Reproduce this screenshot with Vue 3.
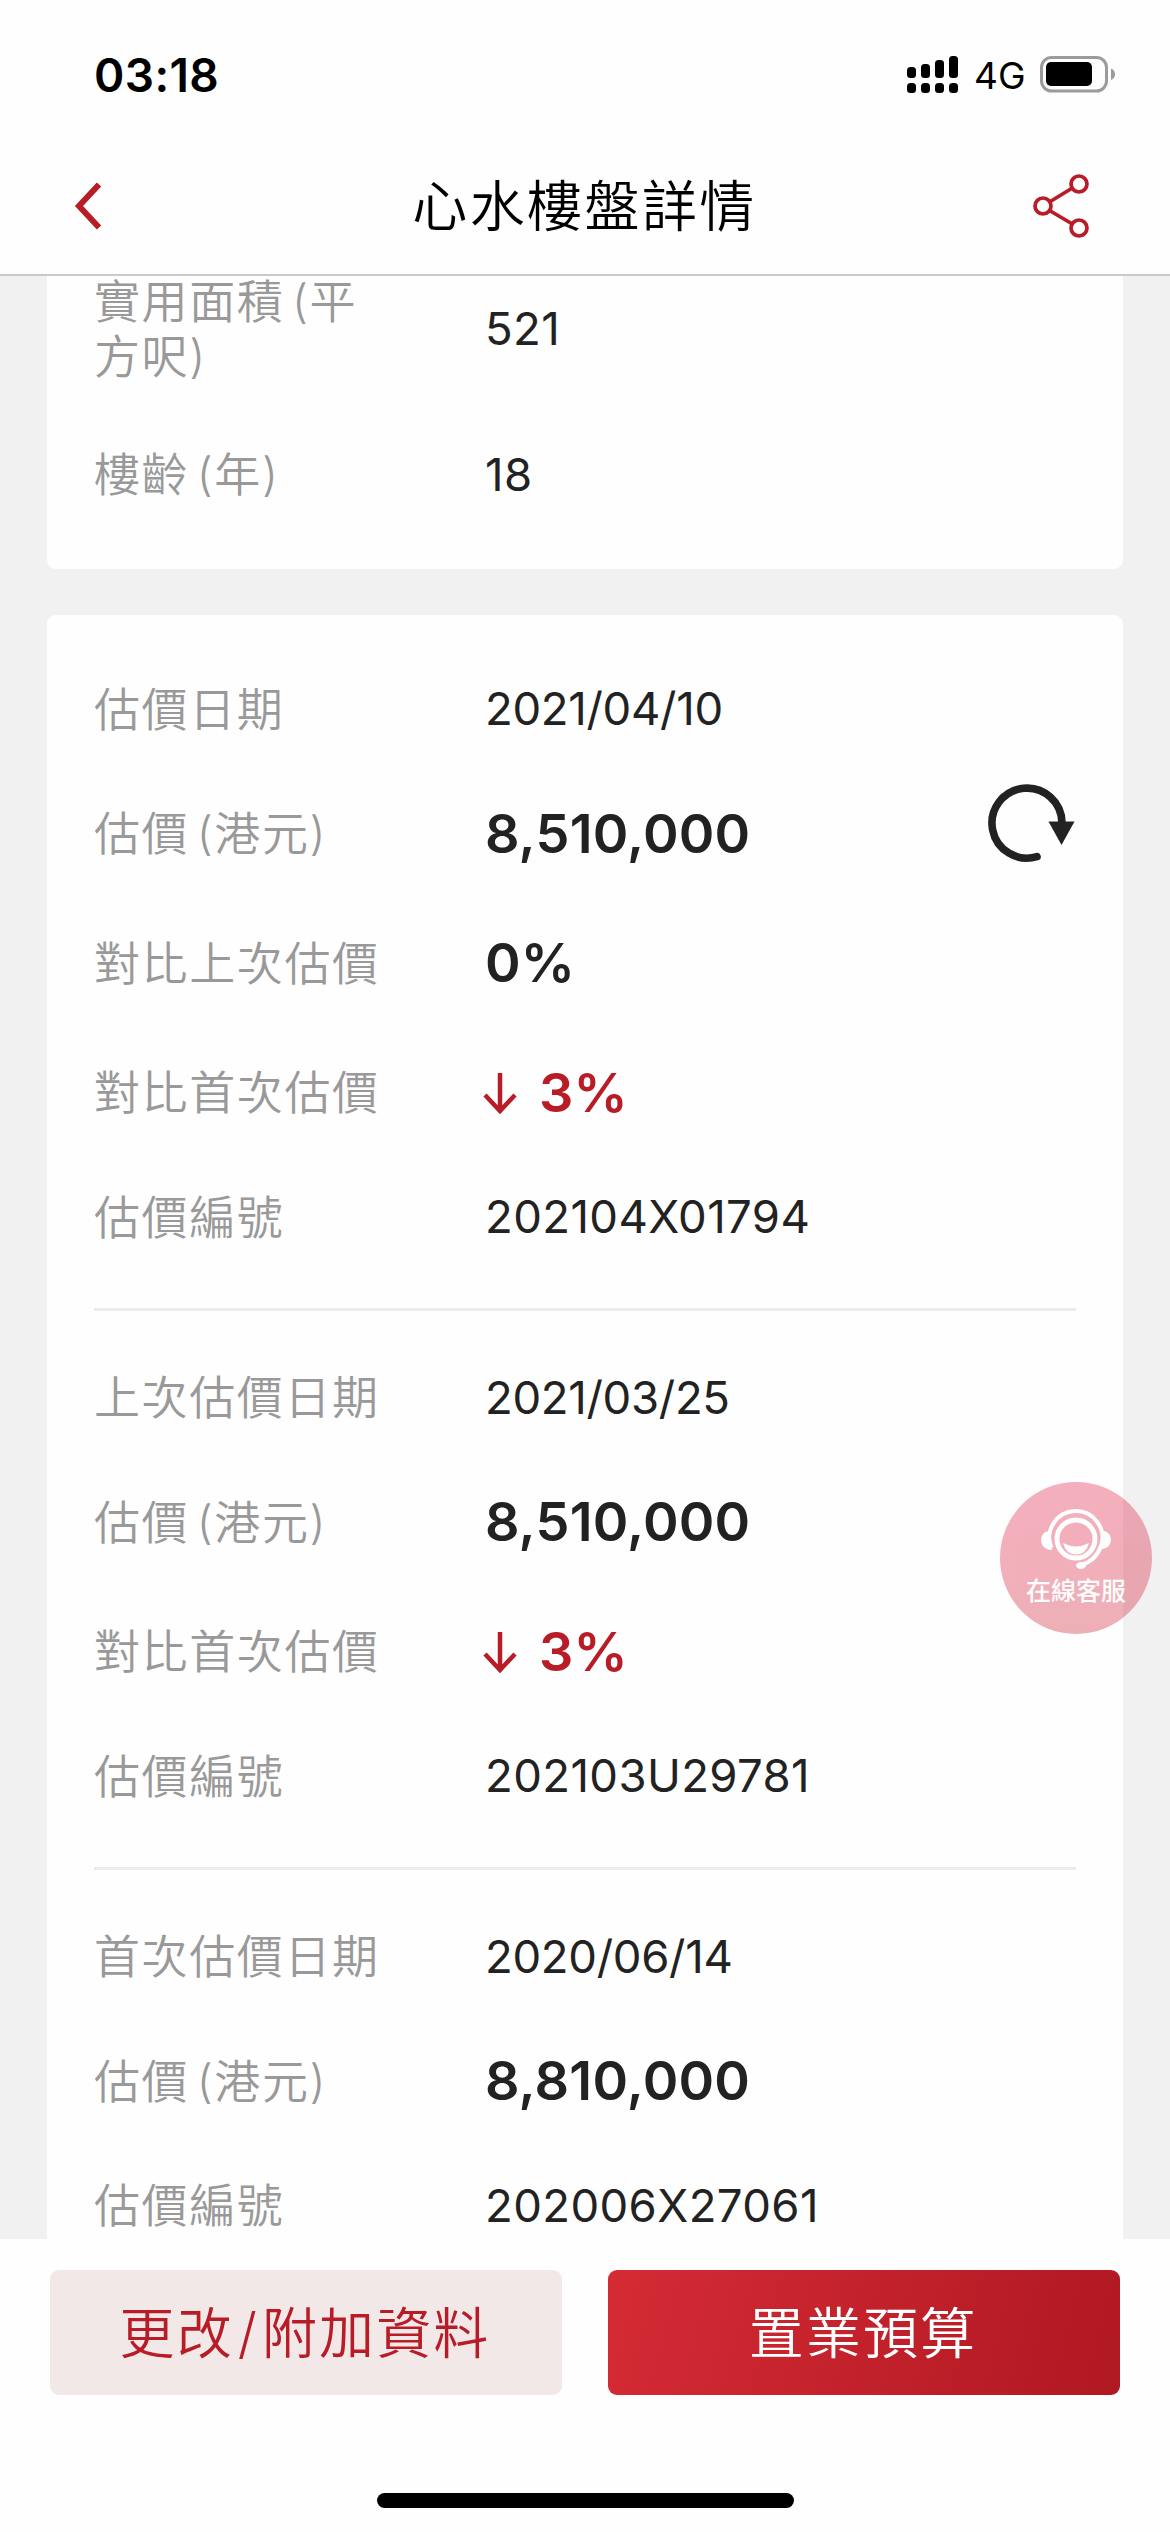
<script setup>
const basics = [
  { label: '實用面積 (平方呎)', value: '521', tall: true },
  { label: '樓齡 (年)', value: '18' },
]

const valuations = [
  [
    { label: '估價日期', value: '2021/04/10', date: true },
    { label: '估價 (港元)', value: '8,510,000', big: true, refresh: true },
    { label: '對比上次估價', value: '0%', big: true },
    { label: '對比首次估價', value: '3%', big: true, down: true },
    { label: '估價編號', value: '202104X01794' },
  ],
  [
    { label: '上次估價日期', value: '2021/03/25', date: true },
    { label: '估價 (港元)', value: '8,510,000', big: true },
    { label: '對比首次估價', value: '3%', big: true, down: true },
    { label: '估價編號', value: '202103U29781' },
  ],
  [
    { label: '首次估價日期', value: '2020/06/14', date: true },
    { label: '估價 (港元)', value: '8,810,000', big: true },
    { label: '估價編號', value: '202006X27061' },
  ],
]
</script>

<template>
  <div class="screen">
    <div class="status">
      <span class="time">03:18</span>
      <div class="status-right">
        <svg class="signal" width="52" height="38" viewBox="0 0 52 38">
          <rect x="0" y="11" width="9" height="11" rx="3.5" />
          <rect x="14" y="8" width="9" height="14" rx="3.5" />
          <rect x="28" y="4" width="9" height="18" rx="3.5" />
          <rect x="42" y="0" width="9" height="22" rx="3.5" />
          <rect v-for="i in 4" :key="i" :x="(i - 1) * 14" y="27" width="9" height="10" rx="3.5" />
        </svg>
        <span class="net">4G</span>
        <svg width="76" height="38" viewBox="0 0 76 38">
          <rect x="1.5" y="1.5" width="65" height="33.5" rx="10" fill="none" stroke="#9b9b9b" stroke-width="3" />
          <rect x="6" y="6" width="46" height="24" rx="5" />
          <path d="M71 12.5c5.300 2 5.300 9.500 0 11.500z" fill="#9b9b9b" />
        </svg>
      </div>
    </div>

    <header class="nav">
      <svg class="back" width="30" height="50" viewBox="0 0 30 50">
        <path d="M27 3.500L7 25L27 46.500" fill="none" stroke="#b81c26" stroke-width="6" />
      </svg>
      <h1>心水樓盤詳情</h1>
      <svg class="share" width="58" height="66" viewBox="0 0 58 66" fill="none" stroke="#b81c26" stroke-width="3.700">
        <path d="M17.500 29L39.500 15.500M17.500 37.500L39.500 50.500" />
        <circle cx="11" cy="33" r="8" />
        <circle cx="47" cy="11" r="8" />
        <circle cx="47" cy="55" r="8" />
      </svg>
    </header>

    <main class="content">
      <section class="card first">
        <div v-for="row in basics" :key="row.label" class="row" :class="{ tall: row.tall }">
          <div class="label">{{ row.label }}</div>
          <div class="value">{{ row.value }}</div>
        </div>
      </section>

      <section class="card">
        <div v-for="(group, i) in valuations" :key="i" class="group">
          <div v-for="row in group" :key="row.label" class="row" :class="{ big: row.big, down: row.down, date: row.date }">
            <div class="label">{{ row.label }}</div>
            <div class="value">
              <svg v-if="row.down" class="arrow" width="34" height="42" viewBox="0 0 34 42">
                <path d="M17 1V38M2 23L17 39L32 23" fill="none" stroke="#b81c26" stroke-width="4.500" />
              </svg>
              <span>{{ row.value }}</span>
            </div>
            <svg v-if="row.refresh" class="refresh" width="90" height="82" viewBox="0 0 90 82">
              <path d="M51 74.700A35 35 0 1 1 76 41" fill="none" stroke="#222" stroke-width="7.600" stroke-linecap="round" />
              <path d="M62.500 39.500H88.500L75.500 63z" fill="#222" />
            </svg>
          </div>
        </div>
      </section>
    </main>

    <footer class="actions">
      <div class="buttons">
        <button class="btn light">更改<span class="slash">/</span>附加資料</button>
        <button class="btn solid">置業預算</button>
      </div>
      <div class="home-bar"></div>
    </footer>

    <div class="chat">
      <svg width="76" height="62" viewBox="0 0 76 62" fill="none" stroke="#fff">
        <circle cx="38" cy="31" r="19" stroke-width="5" />
        <path d="M13.500 40A26.500 26.500 0 1 1 63 38Q57.500 53 43 57" stroke-width="4" />
        <path d="M11 23C0 24 0 42 14 42L11.500 32z" fill="#fff" stroke="none" />
        <path d="M65 23C76 24 76 41 63 41L65 32z" fill="#fff" stroke="none" />
        <ellipse cx="43" cy="57.500" rx="5" ry="3.500" fill="#fff" stroke="none" />
        <path d="M25 35Q38 42 51 35Q48 46.500 38 46.500T25 35z" fill="#fff" stroke="none" />
      </svg>
      <span>在線客服</span>
    </div>
  </div>
</template>

<style>
body { margin: 0; background: #fff; }
</style>

<style scoped>
.screen {
  position: relative;
  display: flex;
  flex-direction: column;
  width: 1170px;
  height: 2532px;
  overflow: hidden;
  background: #fefefe;
  color: #222;
  font-family: Inter, "Noto Sans CJK TC", sans-serif;
}
.status {
  display: flex;
  justify-content: space-between;
  box-sizing: border-box;
  height: 140px;
  padding: 46px 54px 0 94px;
  color: #000;
}
.time {
  font-size: 46px;
  font-weight: 600;
  line-height: 58px;
  letter-spacing: .4px;
}
.status-right {
  display: flex;
  align-items: flex-start;
  padding-top: 10px;
}
.net {
  width: 52px;
  margin: 0 14px 0 15px;
  font-size: 37px;
  line-height: 40px;
}
.nav {
  display: flex;
  align-items: center;
  justify-content: space-between;
  box-sizing: border-box;
  height: 136px;
  padding: 0 80px 2px 72px;
  border-bottom: 2px solid #c9c9c9;
}
.nav h1 {
  margin: 0 0 0 7px;
  font-size: 55px;
  font-weight: 350;
  line-height: 80px;
  letter-spacing: 2.4px;
  color: #000;
}
.back { margin-right: 28px; }
.content {
  flex: none;
  height: 1963px;
  overflow: hidden;
  padding: 0 47px;
  background: #f1f1f1;
}
.card {
  padding: 34.5px 47px;
  border-radius: 9px;
  background: #fefefe;
}
.card.first {
  margin: -33px 0 46px;
  padding-top: 0;
}
.group + .group {
  margin-top: 31px;
  padding-top: 27px;
  border-top: 3px solid #ebebeb;
}
.row {
  display: flex;
  align-items: center;
  height: 119.5px;
}
.row.big { height: 129.5px; }
.row.tall { height: 172px; }
.label {
  width: 295px;
  margin-right: 96px;
  font-size: 46px;
  font-weight: 350;
  line-height: 55px;
  letter-spacing: 1.6px;
  word-spacing: -7px;
  color: #999;
}
.value {
  display: flex;
  align-items: center;
  font-size: 45.5px;
  line-height: 56px;
  letter-spacing: .4px;
}
.date .value { letter-spacing: -.3px; }
.big .value {
  font-size: 54px;
  font-weight: 600;
  letter-spacing: .2px;
}
.down .value { color: #b81c26; }
.arrow { margin: 0 22px 0 -2px; }
.refresh {
  margin: 0 0 22px auto;
}
.actions {
  flex: 1;
  background: #fefefe;
}
.buttons {
  display: flex;
  gap: 46px;
  padding: 31px 50px 0;
}
.btn {
  flex: 1;
  height: 125px;
  padding: 0 2px 7px 0;
  border: 0;
  border-radius: 9px;
  font-family: inherit;
  font-size: 55px;
  font-weight: 350;
  letter-spacing: 2.1px;
}
.btn.light { background: #f3e8e8; color: #b81c26; }
.btn.solid { background: linear-gradient(105deg, #d52b35, #b01822); color: #fff; }
.slash { margin: 0 3px 0 4px; }
.home-bar {
  width: 417px;
  height: 15px;
  margin: 98px auto 0;
  border-radius: 8px;
  background: #000;
}
.chat {
  position: absolute;
  left: 1000px;
  top: 1482px;
  display: flex;
  flex-direction: column;
  align-items: center;
  box-sizing: border-box;
  width: 152px;
  height: 152px;
  padding-top: 26px;
  border-radius: 50%;
  background: linear-gradient(#e41e48, #d01e34);
  color: #fff;
  opacity: .35;
}
.chat span {
  margin-top: 3px;
  font-size: 25px;
  font-weight: 500;
  line-height: 36px;
}
</style>
